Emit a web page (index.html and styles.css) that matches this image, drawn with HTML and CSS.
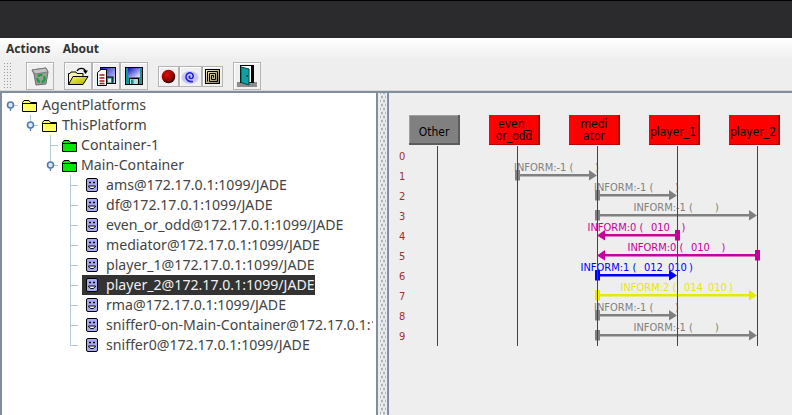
FILE: index.html
```html
<!DOCTYPE html>
<html lang="en">
<head>
    <meta charset="UTF-8">
    <meta name="viewport" content="width=device-width, initial-scale=1.0">
    <title>Sniffer Agent</title>
    <link rel="stylesheet" href="styles.css">
</head>
<body>
    <svg class="defs" width="0" height="0">
        <defs>
            <radialGradient id="ball" cx="0.4" cy="0.35" r="0.65">
                <stop offset="0" stop-color="#e01010"/>
                <stop offset="0.7" stop-color="#900000"/>
                <stop offset="1" stop-color="#200000"/>
            </radialGradient>
            <linearGradient id="disk" x1="0" y1="0" x2="1" y2="1">
                <stop offset="0" stop-color="#1010c0"/>
                <stop offset="1" stop-color="#e8f0ff"/>
            </linearGradient>
            <linearGradient id="openfold" x1="0" y1="0" x2="1" y2="1">
                <stop offset="0" stop-color="#ffff60"/>
                <stop offset="1" stop-color="#a8a800"/>
            </linearGradient>
            <linearGradient id="gold" x1="0" y1="0" x2="1" y2="1">
                <stop offset="0" stop-color="#fff8c0"/>
                <stop offset="1" stop-color="#807860"/>
            </linearGradient>
        </defs>
        <symbol id="handle" viewBox="0 0 18 20">
            <path d="M11 10.5H16" stroke="#b4c8dc" fill="none"/>
            <path d="M8.5 10V16" stroke="#5f86b4" stroke-width="1.4" fill="none"/>
            <circle cx="8.5" cy="10" r="3" fill="#dce8f4" stroke="#4f7cb4" stroke-width="1.6"/>
        </symbol>
        <symbol id="handle-up" viewBox="0 0 18 20">
            <path d="M8.5 0V8" stroke="#b4c8dc" fill="none"/>
            <use href="#handle" width="18" height="20"/>
        </symbol>
        <symbol id="tee" viewBox="0 0 18 20">
            <path d="M8.5 0V20M8.5 10.5H16" stroke="#b4c8dc" fill="none"/>
        </symbol>
        <symbol id="ell" viewBox="0 0 18 20">
            <path d="M8.5 0V10.5H16" stroke="#b4c8dc" fill="none"/>
        </symbol>
        <symbol id="folder-yellow" viewBox="0 0 15 12">
            <path d="M.5 11.5V2.500L2 .5H7L8.500 2.500H14.500V11.500Z" fill="#ffff60" stroke="#000"/>
            <path d="M1 3.500H14" stroke="#000"/>
        </symbol>
        <symbol id="folder-green" viewBox="0 0 15 12">
            <path d="M.5 11.500V2.500L2 .5H7L8.500 2.500H14.500V11.500Z" fill="#00e800" stroke="#000"/>
            <path d="M1 3.500H14" stroke="#000"/>
        </symbol>
        <symbol id="agent" viewBox="0 0 12 14">
            <rect x=".5" y=".5" width="11" height="13" rx="1.5" fill="#a8a8f4" stroke="#000"/>
            <path d="M3 4.500H5M7 4.500H9" stroke="#000" stroke-width="1.6"/>
            <path d="M2.500 8C3.500 11.500 8.500 11.500 9.500 8Z" stroke="#000" fill="#fff"/>
        </symbol>
    </svg>

    <div class="titlebar"></div>

    <div class="menubar">
        <span class="menu-item">Actions</span>
        <span class="menu-item">About</span>
    </div>

    <div class="toolbar">
        <div class="grip"></div>
        <div class="tool tool-first">
            <svg width="20" height="20" viewBox="0 0 20 20">
                <path d="M2 4L16 2L18 6L16 18L6 19L4 8Z" fill="#9c9c9c" stroke="#6c6c6c"/>
                <path d="M2 4L16 2L18 6L5 8Z" fill="#c4c4c4" stroke="#7c7c7c"/>
                <circle cx="11" cy="12.5" r="3.6" fill="none" stroke="#18a038" stroke-width="2.2" stroke-dasharray="5 1.5"/>
            </svg>
        </div>
        <div class="tool tool-gap">
            <svg width="22" height="20" viewBox="0 0 22 20">
                <path d="M1.5 18.5V7.5H3L4 6H9L10 7.500H16V10" fill="#f8f8a0" stroke="#000"/>
                <path d="M1.500 18.500L6 10.500H21L16 18.500Z" fill="url(#openfold)" stroke="#000"/>
                <path d="M10 5C12 1.500 17 1.500 18.500 5" fill="none" stroke="#000" stroke-width="1.400"/>
                <path d="M16 4.500H21L18.500 8Z" fill="#000"/>
            </svg>
        </div>
        <div class="tool">
            <svg width="20" height="20" viewBox="0 0 20 20">
                <rect x="4.500" y="1.500" width="15" height="16" fill="url(#disk)" stroke="#000"/>
                <rect x="9" y="11" width="8" height="6.500" fill="#189090" stroke="#000"/>
                <rect x="12" y="12.500" width="3" height="4" fill="#e8e8e8"/>
                <path d="M1.500 6.500L5 3.500H10.500V19.500H1.500Z" fill="#fff" stroke="#000"/>
                <path d="M3.500 9H8.500M3.500 12H8.500M3.500 15H8.500M3.500 17.500H8.500" stroke="#a01818" stroke-width="1.400"/>
            </svg>
        </div>
        <div class="tool">
            <svg width="20" height="20" viewBox="0 0 20 20">
                <rect x="1.500" y="1.500" width="17" height="17" fill="#109898" stroke="#000"/>
                <rect x="4" y="2" width="12" height="9" fill="url(#disk)"/>
                <rect x="5.500" y="12.500" width="9" height="6" fill="#c0d8d8" stroke="#000"/>
                <rect x="7" y="13.500" width="2.500" height="4.500" fill="#188888"/>
            </svg>
        </div>
        <div class="tool tool-small tool-gap">
            <svg width="15" height="15" viewBox="0 0 15 15">
                <circle cx="7.500" cy="7.500" r="6.800" fill="url(#ball)"/>
            </svg>
        </div>
        <div class="tool tool-small tool-wide">
            <svg width="19" height="17" viewBox="0 0 19 17">
                <ellipse cx="9" cy="9.500" rx="8.500" ry="6.500" fill="#c8c8f4"/>
                <path d="M9.500 8.500C8 8 7.500 10 9.500 10.500C12 11 13 8 11.500 6C9.500 3.500 5.500 5 5 8.500C4.500 12 8 14 12 13.500" fill="none" stroke="#2020d8" stroke-width="1.600"/>
            </svg>
        </div>
        <div class="tool tool-small">
            <svg width="15" height="15" viewBox="0 0 15 15">
                <rect x=".5" y=".5" width="14" height="14" fill="url(#gold)" stroke="#000"/>
                <path d="M2.500 12.500V2.500H12.500V12.500H4.500V4.500H10.500V10.500H6.500V6.500H8.500V8.500" fill="none" stroke="#000"/>
            </svg>
        </div>
        <div class="tool tool-gap">
            <svg width="20" height="22" viewBox="0 0 20 22">
                <rect x="0" y="17" width="20" height="5" fill="#8c8c8c"/>
                <rect x="3.500" y=".5" width="13" height="17" fill="#fff" stroke="#000"/>
                <path d="M4 2L12 4V20L4 17.500Z" fill="#10a0a0" stroke="#004848"/>
                <rect x="9.500" y="10" width="1.500" height="2" fill="#002020"/>
                <path d="M15 1V17" stroke="#000" stroke-width="2"/>
            </svg>
        </div>
    </div>

    <div class="main">
        <div class="tree-pane">
            <div class="tree">
                <div class="row">
                    <svg class="conn"><use href="#handle"/></svg>
                    <svg class="folder"><use href="#folder-yellow"/></svg>
                    <span class="label">AgentPlatforms</span>
                </div>
                <div class="indent">
                    <div class="row">
                        <svg class="conn"><use href="#handle-up"/></svg>
                        <svg class="folder"><use href="#folder-yellow"/></svg>
                        <span class="label">ThisPlatform</span>
                    </div>
                    <div class="indent">
                        <div class="row">
                            <svg class="conn"><use href="#tee"/></svg>
                            <svg class="folder folder-tight"><use href="#folder-green"/></svg>
                            <span class="label">Container-1</span>
                        </div>
                        <div class="row">
                            <svg class="conn"><use href="#handle-up"/></svg>
                            <svg class="folder folder-tight"><use href="#folder-green"/></svg>
                            <span class="label">Main-Container</span>
                        </div>
                        <div class="indent">
                            <div class="row">
                                <svg class="conn"><use href="#tee"/></svg>
                                <div class="agent"><svg class="agent-icon"><use href="#agent"/></svg><span class="label">ams@172.17.0.1:1099/JADE</span></div>
                            </div>
                            <div class="row">
                                <svg class="conn"><use href="#tee"/></svg>
                                <div class="agent"><svg class="agent-icon"><use href="#agent"/></svg><span class="label">df@172.17.0.1:1099/JADE</span></div>
                            </div>
                            <div class="row">
                                <svg class="conn"><use href="#tee"/></svg>
                                <div class="agent"><svg class="agent-icon"><use href="#agent"/></svg><span class="label">even_or_odd@172.17.0.1:1099/JADE</span></div>
                            </div>
                            <div class="row">
                                <svg class="conn"><use href="#tee"/></svg>
                                <div class="agent"><svg class="agent-icon"><use href="#agent"/></svg><span class="label">mediator@172.17.0.1:1099/JADE</span></div>
                            </div>
                            <div class="row">
                                <svg class="conn"><use href="#tee"/></svg>
                                <div class="agent"><svg class="agent-icon"><use href="#agent"/></svg><span class="label">player_1@172.17.0.1:1099/JADE</span></div>
                            </div>
                            <div class="row">
                                <svg class="conn"><use href="#tee"/></svg>
                                <div class="agent selected"><svg class="agent-icon"><use href="#agent"/></svg><span class="label">player_2@172.17.0.1:1099/JADE</span></div>
                            </div>
                            <div class="row">
                                <svg class="conn"><use href="#tee"/></svg>
                                <div class="agent"><svg class="agent-icon"><use href="#agent"/></svg><span class="label">rma@172.17.0.1:1099/JADE</span></div>
                            </div>
                            <div class="row">
                                <svg class="conn"><use href="#tee"/></svg>
                                <div class="agent"><svg class="agent-icon"><use href="#agent"/></svg><span class="label">sniffer0-on-Main-Container@172.17.0.1:1099/JADE</span></div>
                            </div>
                            <div class="row">
                                <svg class="conn"><use href="#ell"/></svg>
                                <div class="agent"><svg class="agent-icon"><use href="#agent"/></svg><span class="label">sniffer0@172.17.0.1:1099/JADE</span></div>
                            </div>
                        </div>
                    </div>
                </div>
            </div>
        </div>

        <div class="divider"></div>

        <div class="diagram-pane">
            <svg class="diagram" viewBox="389 93 403 322">
                <!-- agent boxes -->
                <rect class="box-other-dark" x="409" y="115" width="51" height="30"/>
                <rect class="box-other-light" x="409" y="115" width="49" height="28"/>
                <rect class="box-other" x="410" y="116" width="48" height="27"/>
                <rect class="box-shade" x="489" y="115" width="51" height="30"/>
                <rect class="box-red" x="489" y="115" width="49" height="29"/>
                <rect class="box-shade" x="569" y="115" width="51" height="30"/>
                <rect class="box-red" x="569" y="115" width="49" height="29"/>
                <rect class="box-shade" x="649" y="115" width="51" height="30"/>
                <rect class="box-red" x="649" y="115" width="49" height="29"/>
                <rect class="box-shade" x="729" y="115" width="51" height="30"/>
                <rect class="box-red" x="729" y="115" width="49" height="29"/>
                <text class="box-text" x="434" y="136">Other</text>
                <text class="box-text" x="514" y="128">even_</text>
                <text class="box-text" x="514" y="140">or_odd</text>
                <text class="box-text" x="594" y="128">medi</text>
                <text class="box-text" x="594" y="140">ator</text>
                <text class="box-text" x="673" y="136">player_1</text>
                <text class="box-text" x="753" y="136">player_2</text>

                <!-- time ticks -->
                <text class="tick" x="399" y="160">0</text>
                <text class="tick" x="399" y="180">1</text>
                <text class="tick" x="399" y="200">2</text>
                <text class="tick" x="399" y="220">3</text>
                <text class="tick" x="399" y="240">4</text>
                <text class="tick" x="399" y="260">5</text>
                <text class="tick" x="399" y="280">6</text>
                <text class="tick" x="399" y="300">7</text>
                <text class="tick" x="399" y="320">8</text>
                <text class="tick" x="399" y="340">9</text>

                <!-- messages -->
                <g class="msg-gray">
                    <text x="514" y="171">INFORM:-1 (<tspan x="595">)</tspan></text>
                    <path d="M515 170h5v4h69v-4l8 5.500l-8 5v-4h-69v4h-5z"/>
                    <text x="594" y="191">INFORM:-1 (<tspan x="675">)</tspan></text>
                    <path d="M595 190h5v4h69v-4l8 5.500l-8 5v-4h-69v4h-5z"/>
                    <text x="633.500" y="211">INFORM:-1 (<tspan x="715">)</tspan></text>
                    <path d="M595 210h5v4h149v-4l8 5.500l-8 5v-4h-149v4h-5z"/>
                    <text x="594" y="311">INFORM:-1 (<tspan x="675">)</tspan></text>
                    <path d="M595 310h5v4h69v-4l8 5.500l-8 5v-4h-69v4h-5z"/>
                    <text x="633.500" y="331">INFORM:-1 (<tspan x="715">)</tspan></text>
                    <path d="M595 330h5v4h149v-4l8 5.500l-8 5v-4h-149v4h-5z"/>
                </g>
                <g class="msg-magenta">
                    <text x="587.500" y="231">INFORM:0 (<tspan x="651">010</tspan><tspan x="681.500">)</tspan></text>
                    <path d="M680 230h-5v4h-70v-4l-8 5.500l8 5v-4h70v4h5z"/>
                    <text x="627.500" y="251">INFORM:0 (<tspan x="691">010</tspan><tspan x="721.500">)</tspan></text>
                    <path d="M760 250h-5v4h-150v-4l-8 5.500l8 5v-4h150v4h5z"/>
                </g>
                <g class="msg-blue">
                    <text x="580.500" y="271">INFORM:1 (<tspan x="644">012</tspan><tspan x="668">010</tspan><tspan x="689">)</tspan></text>
                    <path d="M595 270h5v4h69v-4l8 5.500l-8 5v-4h-69v4h-5z"/>
                </g>
                <g class="msg-yellow">
                    <text x="620.500" y="291">INFORM:2 (<tspan x="684">014</tspan><tspan x="708">010</tspan><tspan x="729">)</tspan></text>
                    <path d="M595 290h5v4h149v-4l8 5.500l-8 5v-4h-149v4h-5z"/>
                </g>

                <!-- lifelines -->
                <path class="lifeline" d="M437.500 146V346M517.500 146V346M597.500 146V346M677.500 146V346M757.500 146V346"/>
            </svg>
        </div>
    </div>
</body>
</html>
```

FILE: styles.css
```css
html, body {
    margin: 0;
    height: 100%;
    overflow: hidden;
}
body {
    display: flex;
    flex-direction: column;
    background: #eeeeee;
    font-family: "Noto Sans", sans-serif;
    color: #444;
}
.defs { display: block; }

.titlebar {
    height: 37px;
    flex: none;
    background: #2b2b2e;
    border-top: 1px solid #000;
}

.menubar {
    height: 22px;
    flex: none;
    display: flex;
    align-items: center;
    gap: 12px;
    padding-left: 6px;
    background: linear-gradient(#ffffff, #eeeeee);
}
.menu-item {
    font-size: 12px;
    font-weight: bold;
    color: #333;
    margin-bottom: 2px;
}

.toolbar {
    height: 30px;
    flex: none;
    display: flex;
    align-items: center;
    padding: 1px 0 0 3px;
    background: #eeeeee;
    box-shadow: inset 0 -1px 0 #d8d8d8;
}
.grip {
    width: 9px;
    height: 28px;
    margin-right: 14px;
    background-image: radial-gradient(#9a9a9a 0.8px, transparent 1px);
    background-size: 3px 3px;
}
.tool {
    width: 28px;
    height: 28px;
    box-sizing: border-box;
    display: flex;
    align-items: center;
    justify-content: center;
    border: 1px solid #b4b4b4;
    background: #f0f0f0;
    box-shadow: inset 1px 1px 0 #fff;
}
.tool-gap { margin-left: 10px; }
.tool-first { margin-left: 0; }
.tool-small {
    width: 21px;
    height: 21px;
}
.tool-wide { width: 23px; }

.main {
    flex: 1;
    display: flex;
    min-height: 0;
    border-top: 2px solid #7f8fa0;
}

.tree-pane {
    width: 376px;
    flex: none;
    padding-top: 2px;
    box-sizing: border-box;
    background: #fff;
    border-left: 2px solid #7f8fa0;
    font-size: 14.13px;
}
.tree {
    width: 371px;
    overflow: hidden;
}
.indent { padding-left: 20px; }
.row {
    height: 20px;
    display: flex;
    align-items: center;
    white-space: nowrap;
}
.label { margin-bottom: 2px; }
.conn {
    width: 18px;
    height: 20px;
    flex: none;
    margin-right: 2px;
}
.folder {
    width: 15px;
    height: 12px;
    flex: none;
    margin: 2px 5px 0 0;
}
.folder-tight { margin-right: 4px; }
.agent {
    height: 20px;
    display: flex;
    align-items: center;
    padding: 0 0 0 4px;
    gap: 8px;
}
.agent-icon {
    width: 12px;
    height: 14px;
    flex: none;
}
.selected {
    background: #333333;
    color: #f0f0f0;
}

.divider {
    width: 11px;
    flex: none;
    box-sizing: border-box;
    border-left: 2px solid #7f8fa0;
    background-color: #eeeeee;
    background-image: radial-gradient(#a8b4c0 0.7px, transparent 1px), radial-gradient(#a8b4c0 0.7px, transparent 1px);
    background-size: 4px 8px;
    background-position: 2px 0, 0 4px;
    background-clip: content-box;
    padding: 0 1px 0 2px;
}

.diagram-pane {
    flex: 1;
    min-width: 0;
    background: #eeeeee;
    border-left: 2px solid #7f8fa0;
}
.diagram {
    display: block;
    width: 403px;
    height: 322px;
}
.box-red { fill: #ff0000; }
.box-shade { fill: #b80000; }
.box-other { fill: #808080; }
.box-other-light { fill: #a0a0a0; }
.box-other-dark { fill: #5c5c5c; }
.box-text {
    font-family: "DejaVu Sans Condensed", "DejaVu Sans", sans-serif;
    font-size: 12px;
    fill: #000;
    text-anchor: middle;
}
.tick {
    font-family: "DejaVu Sans Condensed", "DejaVu Sans", sans-serif;
    font-size: 11px;
    fill: #a03030;
}
.diagram g text {
    font-family: "DejaVu Sans Condensed", "DejaVu Sans", sans-serif;
    font-size: 11px;
}
.msg-gray { fill: #808080; }
.msg-magenta { fill: #c8009a; }
.msg-blue { fill: #0000ff; }
.msg-yellow { fill: #e8e800; }
.lifeline {
    fill: none;
    stroke: #0f5f3f;
    stroke-width: 1;
}
```
